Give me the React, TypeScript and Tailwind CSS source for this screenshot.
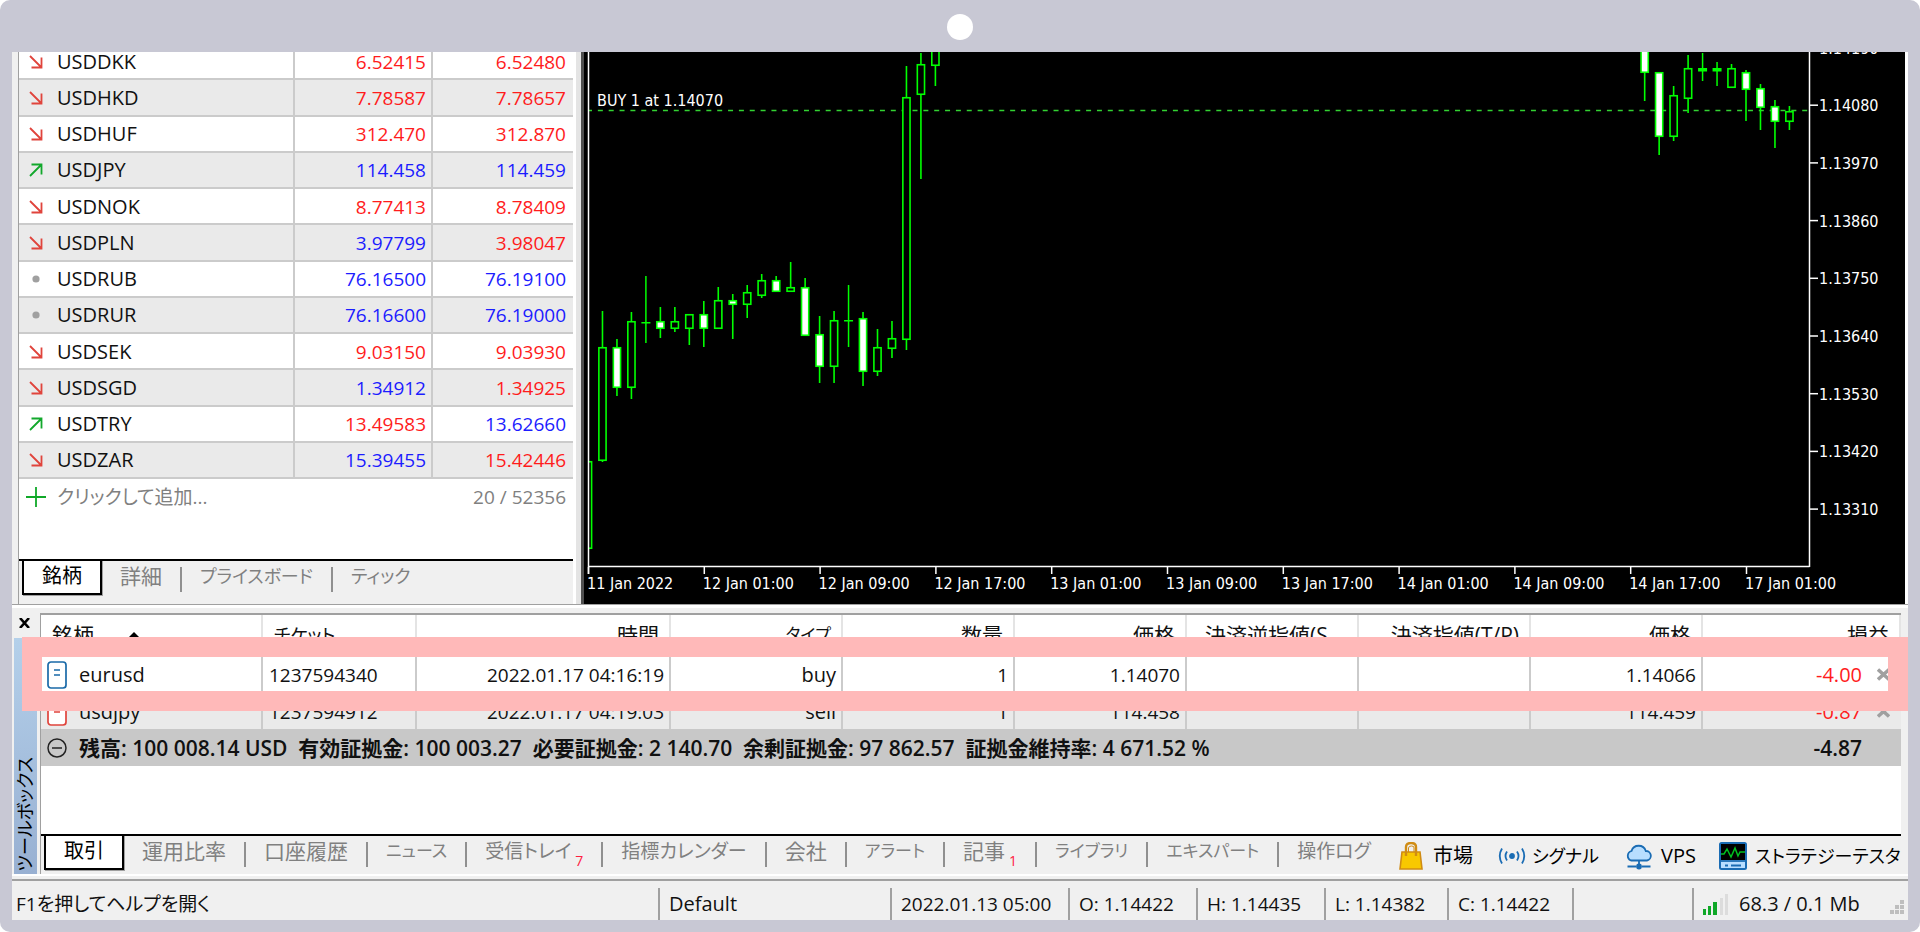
import { ReactNode } from 'react';
import clsx from 'clsx';

type Trend = 'up' | 'down' | 'flat';

interface Quote {
  symbol: string;
  trend: Trend;
  bid: string;
  ask: string;
  bidUp?: boolean;
  askUp?: boolean;
}

interface Candle {
  i: number;
  high: number;
  low: number;
  top: number;
  bottom: number;
  bear?: boolean;
}

const quotes: Quote[] = [
  { symbol: 'USDDKK', trend: 'down', bid: '6.52415', ask: '6.52480' },
  { symbol: 'USDHKD', trend: 'down', bid: '7.78587', ask: '7.78657' },
  { symbol: 'USDHUF', trend: 'down', bid: '312.470', ask: '312.870' },
  { symbol: 'USDJPY', trend: 'up', bid: '114.458', ask: '114.459', bidUp: true, askUp: true },
  { symbol: 'USDNOK', trend: 'down', bid: '8.77413', ask: '8.78409' },
  { symbol: 'USDPLN', trend: 'down', bid: '3.97799', ask: '3.98047', bidUp: true },
  { symbol: 'USDRUB', trend: 'flat', bid: '76.16500', ask: '76.19100', bidUp: true, askUp: true },
  { symbol: 'USDRUR', trend: 'flat', bid: '76.16600', ask: '76.19000', bidUp: true, askUp: true },
  { symbol: 'USDSEK', trend: 'down', bid: '9.03150', ask: '9.03930' },
  { symbol: 'USDSGD', trend: 'down', bid: '1.34912', ask: '1.34925', bidUp: true },
  { symbol: 'USDTRY', trend: 'up', bid: '13.49583', ask: '13.62660', askUp: true },
  { symbol: 'USDZAR', trend: 'down', bid: '15.39455', ask: '15.42446', bidUp: true },
];

const candles: Candle[] = [
  { i: 0, high: 461, low: 549, top: 461, bottom: 549 },
  { i: 1, high: 311, low: 462, top: 347, bottom: 461 },
  { i: 2, high: 339, low: 396, top: 347, bottom: 388, bear: true },
  { i: 3, high: 312, low: 399, top: 321, bottom: 388 },
  { i: 4, high: 276, low: 343, top: 322, bottom: 323 },
  { i: 5, high: 307, low: 338, top: 321, bottom: 329, bear: true },
  { i: 6, high: 307, low: 332, top: 321, bottom: 329 },
  { i: 7, high: 314, low: 345, top: 314, bottom: 329 },
  { i: 8, high: 301, low: 347, top: 314, bottom: 329, bear: true },
  { i: 9, high: 287, low: 329, top: 300, bottom: 329 },
  { i: 10, high: 294, low: 339, top: 300, bottom: 305, bear: true },
  { i: 11, high: 285, low: 318, top: 292, bottom: 305 },
  { i: 12, high: 274, low: 298, top: 280, bottom: 296 },
  { i: 13, high: 276, low: 292, top: 280, bottom: 292, bear: true },
  { i: 14, high: 262, low: 292, top: 287, bottom: 292 },
  { i: 15, high: 278, low: 336, top: 287, bottom: 336, bear: true },
  { i: 16, high: 316, low: 383, top: 334, bottom: 367, bear: true },
  { i: 17, high: 311, low: 383, top: 320, bottom: 367 },
  { i: 18, high: 285, low: 347, top: 320, bottom: 321 },
  { i: 19, high: 312, low: 386, top: 318, bottom: 372, bear: true },
  { i: 20, high: 329, low: 376, top: 347, bottom: 372 },
  { i: 21, high: 321, low: 358, top: 338, bottom: 349 },
  { i: 22, high: 66, low: 350, top: 97, bottom: 340 },
  { i: 23, high: 53, low: 179, top: 64, bottom: 95 },
  { i: 24, high: 40, low: 86, top: 40, bottom: 66 },
  { i: 73, high: 40, low: 101, top: 40, bottom: 73, bear: true },
  { i: 74, high: 72, low: 155, top: 72, bottom: 137, bear: true },
  { i: 75, high: 86, low: 141, top: 95, bottom: 137 },
  { i: 76, high: 55, low: 113, top: 68, bottom: 99 },
  { i: 77, high: 53, low: 81, top: 68, bottom: 71 },
  { i: 78, high: 62, low: 86, top: 68, bottom: 71 },
  { i: 79, high: 64, low: 88, top: 68, bottom: 88 },
  { i: 80, high: 70, low: 121, top: 72, bottom: 90, bear: true },
  { i: 81, high: 84, low: 130, top: 88, bottom: 108, bear: true },
  { i: 82, high: 100, low: 148, top: 106, bottom: 122, bear: true },
  { i: 83, high: 106, low: 130, top: 111, bottom: 122 },
];

const prices = ['1.14190', '1.14080', '1.13970', '1.13860', '1.13750', '1.13640', '1.13530', '1.13420', '1.13310'];

const times = [
  '11 Jan 2022',
  '12 Jan 01:00',
  '12 Jan 09:00',
  '12 Jan 17:00',
  '13 Jan 01:00',
  '13 Jan 09:00',
  '13 Jan 17:00',
  '14 Jan 01:00',
  '14 Jan 09:00',
  '14 Jan 17:00',
  '17 Jan 01:00',
];

const positions = [
  { symbol: 'eurusd', ticket: '1237594340', time: '2022.01.17 04:16:19', type: 'buy', volume: '1', open: '1.14070', price: '1.14066', profit: '-4.00' },
  { symbol: 'usdjpy', ticket: '1237594912', time: '2022.01.17 04:19:03', type: 'sell', volume: '1', open: '114.458', price: '114.459', profit: '-0.87' },
];

interface TabProps {
  label: string;
  size?: string;
  badge?: string;
  last?: boolean;
}

const toolboxTabs: TabProps[] = [
  { label: '運用比率' },
  { label: '口座履歴' },
  { label: 'ニュース', size: 'text-[17px]' },
  { label: '受信トレイ', size: 'text-[19px]', badge: '7' },
  { label: '指標カレンダー', size: 'text-[19px]' },
  { label: '会社' },
  { label: 'アラート', size: 'text-[17px]' },
  { label: '記事', badge: '1' },
  { label: 'ライブラリ', size: 'text-[17px]' },
  { label: 'エキスパート', size: 'text-[17px]' },
  { label: '操作ログ', size: 'text-[19px]', last: true },
];

function TrendIcon({ trend }: { trend: Trend }) {
  if (trend === 'flat') {
    return (
      <svg width="14" height="14" viewBox="0 0 14 14">
        <circle cx="7" cy="7" r="3.6" fill="#a0a0a0" />
      </svg>
    );
  }
  return (
    <svg width="14" height="14" viewBox="0 0 14 14" fill="none" strokeWidth="1.8" stroke={trend === 'up' ? '#12a82c' : '#e0443c'}>
      {trend === 'up' ? <path d="M1 13 12.5 1.5M2.5 1.5h10v10" /> : <path d="M1 1l11.5 11.5M2.5 12.5h10v-10" />}
    </svg>
  );
}

function OrderIcon({ sell }: { sell?: boolean }) {
  const color = sell ? '#e0443c' : '#1a6aa8';
  return (
    <svg width="20" height="28" viewBox="0 0 20 28" fill="#fff" stroke={color} strokeWidth="1.7">
      <rect x="1" y="1" width="18" height="26" rx="3" />
      <path d="M7 9h6M7 14h6" />
    </svg>
  );
}

function CloseIcon() {
  return (
    <svg width="13" height="13" viewBox="0 0 13 13" stroke="#a0a0a0" strokeWidth="3.4">
      <path d="M1 1.5 12 11.5M12 1.5 1 11.5" />
    </svg>
  );
}

function BagIcon() {
  return (
    <svg width="24" height="28" viewBox="0 0 24 28" fill="none" stroke="#d08c14" strokeWidth="1.6">
      <path d="M3 10h18l2 17H1z" fill="#f8c800" />
      <path d="M7 14V5q0-4 5-4t5 4v9" strokeWidth="2.4" />
      <path d="M9.500 10V6q0-2 3-2t2.500 2v4" strokeWidth="1" />
    </svg>
  );
}

function SignalIcon() {
  return (
    <svg width="28" height="18" viewBox="0 0 28 18" fill="none" stroke="#1a6cb4" strokeWidth="1.8">
      <circle cx="14" cy="9" r="2" fill="#1a6cb4" />
      <path d="M9 4.500q-3 4.500 0 9M19 4.500q3 4.500 0 9M4 1.500q-4.500 7.500 0 15M24 1.500q4.500 7.500 0 15" />
    </svg>
  );
}

function CloudIcon() {
  return (
    <svg width="28" height="28" viewBox="0 0 28 28" fill="none" stroke="#1a6cb4" strokeWidth="1.8">
      <path d="M6 18.500a5 5 0 0 1 .5-9.500 7.500 7.500 0 0 1 14.300 0A4.800 4.800 0 0 1 22 18.500z" fill="#b8deff" />
      <path d="M14 18.500v5M2.500 24.500H11M17 24.500h8.500" />
      <circle cx="14" cy="24.500" r="2" fill="#1a6cb4" />
    </svg>
  );
}

function TesterIcon() {
  return (
    <svg width="28" height="28" viewBox="0 0 28 28" fill="none">
      <rect x="1" y="1" width="26" height="26" rx="1.500" fill="#b8deff" stroke="#1a6cb4" strokeWidth="2" />
      <path d="M2 2h24v16H2z" fill="#000" />
      <path d="M2 12h3l3-5 4 8 4-9 3 8 2-4h5" stroke="#00c020" strokeWidth="1.5" />
      <path d="M1 19h26" stroke="#1a6cb4" strokeWidth="1.8" />
      <path d="M6 23.500h3M12 23.500h10" stroke="#1a6cb4" strokeWidth="1.8" />
    </svg>
  );
}

function TabBar({ active, children }: { active: string; children: ReactNode }) {
  return (
    <div className="flex h-[40px] items-start overflow-hidden whitespace-nowrap border-t-2 border-black bg-[#f0f0f0] pl-[3px] text-[#808080]">
      <button className="relative -mt-[2px] h-[36px] w-[80px] shrink-0 border-x-2 border-b-2 border-black bg-white text-[20px] leading-[30px] text-black shadow-[1px_1px_0_#a0a0a0]">
        {active}
      </button>
      {children}
    </div>
  );
}

function Tab({ label, size = 'text-[21px]', badge, last }: TabProps) {
  return (
    <button
      className={clsx(
        'mt-[6px] flex h-[25px] shrink-0 items-center px-[18px]',
        size,
        !last && 'border-r-2 border-[#909090]',
      )}
    >
      <span className="-mt-[8px]">{label}</span>
      {badge && <span className="mt-[12px] pl-[4px] text-[14px] text-[#ff2040]">{badge}</span>}
    </button>
  );
}

function MarketWatch() {
  const price = 'border-b-2 border-[#cbcbcb] p-0 pt-[1px] text-right leading-[20px]';
  return (
    <section className="flex w-[564px] shrink-0 bg-[#f0f0f0] pl-[6px]">
      <div className="flex min-w-0 flex-1 flex-col border-l border-r-[3px] border-l-[#a0a0a0] border-r-white bg-white">
        <table className="-mt-[8px] h-[435px] w-full table-fixed border-separate border-spacing-0">
          <colgroup>
            <col />
            <col className="w-[138px]" />
            <col className="w-[140px]" />
          </colgroup>
          <tbody>
            {quotes.map((q) => (
              <tr key={q.symbol} className="odd:bg-white even:bg-[#eaeaea]">
                <td className="border-b-2 border-r-2 border-[#cbcbcb] p-0 pt-[1px]">
                  <div className="flex items-center gap-[14px] pl-[10px] text-[20px] leading-[20px]">
                    <TrendIcon trend={q.trend} />
                    {q.symbol}
                  </div>
                </td>
                <td className={clsx(price, 'border-r-2 pr-[5px]', q.bidUp ? 'text-[#1c1cff]' : 'text-[#ff1c1c]')}>{q.bid}</td>
                <td className={clsx(price, 'pr-[7px]', q.askUp ? 'text-[#1c1cff]' : 'text-[#ff1c1c]')}>{q.ask}</td>
              </tr>
            ))}
          </tbody>
        </table>
        <div className="flex h-[36px] items-center px-[7px] text-[#808080]">
          <svg width="20" height="20" viewBox="0 0 20 20" stroke="#10a828" strokeWidth="1.8">
            <path d="M10 0v20M0 10h20" />
          </svg>
          <button className="ml-[11px]">クリックして追加...</button>
          <span className="ml-auto">20 / 52356</span>
        </div>
        <div className="mt-auto bg-[#f0f0f0] pb-[5px]">
          <TabBar active="銘柄">
            <Tab label="詳細" />
            <Tab label="プライスボード" size="text-[18px]" />
            <Tab label="ティック" size="text-[18px]" last />
          </TabBar>
        </div>
      </div>
    </section>
  );
}

function CandleShape({ c }: { c: Candle }) {
  const x = 588 + c.i * 14.475;
  if (c.bottom - c.top < 4) {
    return (
      <g stroke="#00ff00" strokeWidth="1.5">
        <path d={`M${x} ${c.high}V${c.low}`} />
        <rect x={x - 4.5} y={c.top} width="9" height={c.bottom - c.top + 0.5} fill="#00ff00" stroke="none" />
      </g>
    );
  }
  return (
    <g stroke="#00ff00" strokeWidth="1.6">
      <path d={`M${x} ${c.high}V${c.low}`} />
      <rect x={x - 3.6} y={c.top + 0.75} width="7.2" height={c.bottom - c.top - 1.5} fill={c.bear ? '#fff' : '#000'} />
    </g>
  );
}

function Chart() {
  return (
    <section className="min-w-0 flex-1 border-r-[3px] border-white bg-black">
      <svg viewBox="584 52 1321 552" preserveAspectRatio="xMinYMin slice" className="h-full w-full font-['DejaVu_Sans_Condensed','DejaVu_Sans',sans-serif] text-[16px]">
        <path d="M588 110.500H1809" stroke="#32d232" strokeWidth="1.4" strokeDasharray="5 5.850" strokeDashoffset="1" />
        <svg x="588" y="52" width="1221" height="515" viewBox="588 52 1221 515">
          {candles.map((c) => (
            <CandleShape key={c.i} c={c} />
          ))}
        </svg>
        <path d="M588.500 52V574M588 566.500H1809.500M1809.500 52V567" fill="none" stroke="#fff" strokeWidth="1.5" />
        <text x="597" y="106" fill="#fff">BUY 1 at 1.14070</text>
        {prices.map((p, i) => (
          <g key={p}>
            <path d={`M1810 ${47.5 + i * 57.7}h8`} stroke="#fff" strokeWidth="1.5" />
            <text x="1819" y={53.5 + i * 57.7} fill="#fff">{p}</text>
          </g>
        ))}
        {times.map((t, i) => (
          <g key={t}>
            <path d={`M${588.5 + i * 115.8} 567v7`} stroke="#fff" strokeWidth="1.5" />
            <text x={587 + i * 115.8} y="589" fill="#fff">{t}</text>
          </g>
        ))}
      </svg>
    </section>
  );
}

function Positions() {
  const head = 'border-r-2 border-[#e4e4e4] p-0 pr-[10px] text-right font-normal whitespace-nowrap overflow-hidden';
  const cell = 'border-r-2 border-[#cbcbcb] p-0 pt-[2px] pr-[5px] text-right whitespace-nowrap';
  return (
    <table className="w-full table-fixed border-separate border-spacing-0">
      <colgroup>
        <col className="w-[222px]" />
        <col className="w-[154px]" />
        <col className="w-[254px]" />
        <col className="w-[172px]" />
        <col className="w-[172px]" />
        <col className="w-[172px]" />
        <col className="w-[172px]" />
        <col className="w-[172px]" />
        <col className="w-[172px]" />
        <col />
      </colgroup>
      <thead>
        <tr className="h-[40px] text-[21px]">
          <th className={head}>
            <div className="flex items-center gap-[34px] pl-[11px]">
              銘柄
              <svg width="12" height="6" viewBox="0 0 12 6">
                <path d="M6 0l6 6H0z" />
              </svg>
            </div>
          </th>
          <th className={head}>
            <div className="pl-[11px] text-left text-[18px]">チケット</div>
          </th>
          <th className={head}>時間</th>
          <th className={head}>
            <div className="text-[17px]">タイプ</div>
          </th>
          <th className={head}>数量</th>
          <th className={head}>価格</th>
          <th className={head}>
            <div className="pl-[18px] text-left">決済逆指値(S</div>
          </th>
          <th className={head}>決済指値(T/P)</th>
          <th className={head}>価格</th>
          <th className={head}>損益</th>
        </tr>
      </thead>
      <tbody>
        {positions.map((p) => (
          <tr key={p.ticket} className="h-[37px] odd:bg-white even:bg-[#eaeaea]">
            <td className={cell}>
              <div className="flex items-center gap-[12px] pl-[6px] text-[20px]">
                <OrderIcon sell={p.type === 'sell'} />
                {p.symbol}
              </div>
            </td>
            <td className={cell}>
              <div className="pl-[6px] text-left">{p.ticket}</div>
            </td>
            <td className={cell}>{p.time}</td>
            <td className={clsx(cell, 'text-[20px]')}>{p.type}</td>
            <td className={cell}>{p.volume}</td>
            <td className={cell}>{p.open}</td>
            <td className={cell} />
            <td className={cell} />
            <td className={cell}>{p.price}</td>
            <td className="p-0 pt-[2px] pr-[11px]">
              <div className="flex items-center justify-end gap-[15px] text-[20px] text-[#ff1c1c]">
                {p.profit}
                <button aria-label="決済">
                  <CloseIcon />
                </button>
              </div>
            </td>
          </tr>
        ))}
      </tbody>
      <tfoot>
        <tr className="h-[37px] bg-[#c8c8c8] text-[21px] font-semibold">
          <td colSpan={9} className="p-0">
            <div className="flex items-center gap-[12px] whitespace-pre pl-[6px]">
              <svg width="20" height="20" viewBox="0 0 20 20" fill="none" stroke="#222" strokeWidth="1.5">
                <circle cx="10" cy="10" r="9" />
                <path d="M5 10h10" />
              </svg>
              残高: 100 008.14 USD  有効証拠金: 100 003.27  必要証拠金: 2 140.70  余剰証拠金: 97 862.57  証拠金維持率: 4 671.52 %
            </div>
          </td>
          <td className="p-0 pr-[39px] text-right">-4.87</td>
        </tr>
      </tfoot>
    </table>
  );
}

function Toolbox() {
  return (
    <section className="relative flex bg-[#f0f0f0] pr-[7px] pt-[5px]">
      <div className="flex w-[28px] shrink-0 flex-col pl-[2px] pr-[3px]">
        <button aria-label="閉じる" className="flex h-[25px] items-center pl-[5px] pb-[6px]">
          <svg width="11" height="10" viewBox="0 0 11 10" stroke="#000" strokeWidth="2.6">
            <path d="M1 0l9 10M10 0L1 10" />
          </svg>
        </button>
        <div className="flex flex-1 items-end justify-center bg-linear-to-b from-[#b4d0ea] to-[#98b0d2] pb-[3px]">
          <span className="rotate-180 text-[18px] leading-[23px] text-black [text-orientation:sideways] [writing-mode:vertical-rl]">ツールボックス</span>
        </div>
      </div>
      <div className="min-w-0 flex-1 border-l border-t-2 border-[#a0a0a0] bg-white">
        <Positions />
        <div className="h-[68px]" />
        <TabBar active="取引">
          {toolboxTabs.map((t) => (
            <Tab key={t.label} {...t} />
          ))}
          <div className="ml-auto flex w-[502px] shrink-0 items-center overflow-hidden pt-[6px] text-[20px] leading-[28px] text-black">
            <a href="#market" className="flex w-[99px] shrink-0 items-center gap-[10px]">
              <BagIcon />
              市場
            </a>
            <a href="#signals" className="flex w-[127px] shrink-0 items-center gap-[6px] text-[18px]">
              <SignalIcon />
              シグナル
            </a>
            <a href="#vps" className="flex w-[94px] shrink-0 items-center gap-[8px]">
              <CloudIcon />
              VPS
            </a>
            <a href="#tester" className="flex shrink-0 items-center gap-[8px] text-[18px]">
              <TesterIcon />
              ストラテジーテスター
            </a>
          </div>
        </TabBar>
      </div>
      {/* frame around the selected position */}
      <div className="pointer-events-none absolute left-[10px] right-0 top-[29px] h-[74px] border-[20px] border-[#ffb9b9]" />
    </section>
  );
}

function StatusCell({ className, children }: { className?: string; children?: ReactNode }) {
  return <div className={clsx('flex h-[32px] shrink-0 items-center border-l-2 border-[#a0a0a0] pl-[9px]', className)}>{children}</div>;
}

function StatusBar() {
  return (
    <footer className="flex items-end whitespace-nowrap border-t-2 border-[#a0a0a0] bg-[#f0f0f0] pt-[7px]">
      <div className="flex h-[32px] flex-1 items-center pl-[4px]">F1を押してヘルプを開く</div>
      <StatusCell className="w-[232px] text-[20px]">Default</StatusCell>
      <StatusCell className="w-[178px]">2022.01.13 05:00</StatusCell>
      <StatusCell className="w-[128px]">O: 1.14422</StatusCell>
      <StatusCell className="w-[128px]">H: 1.14435</StatusCell>
      <StatusCell className="w-[123px]">L: 1.14382</StatusCell>
      <StatusCell className="w-[125px]">C: 1.14422</StatusCell>
      <StatusCell className="w-[120px]" />
      <StatusCell className="w-[216px] justify-between">
        <span className="flex items-center gap-[10px] text-[20px]">
          <svg width="26" height="21" viewBox="0 0 26 21">
            <path d="M0 15h3v6H0zM5 12h3v9H5zM10 8h4v13h-4z" fill="#10a828" />
            <path d="M17 4h3v17h-3zM22 0h3v21h-3z" fill="#dcdcdc" />
          </svg>
          68.3 / 0.1 Mb
        </span>
        <svg width="18" height="28" viewBox="0 0 18 28" fill="#bebebe">
          <path d="M10 10h4v4h-4zM5 15h4v4H5zM10 15h4v4h-4zM0 20h4v4H0zM5 20h4v4H5zM10 20h4v4h-4z" />
        </svg>
      </StatusCell>
    </footer>
  );
}

export default function App() {
  return (
    <div className="min-h-screen rounded-[10px] bg-[#c8c8d4] px-[12px] pb-[12px] font-['Open_Sans','Noto_Sans_CJK_JP',sans-serif] text-[19px] leading-[26px] text-[#111] [font-feature-settings:'palt']">
      <header className="flex h-[52px] items-center justify-center pt-[2px]">
        <span className="h-[26px] w-[26px] rounded-full bg-white" />
      </header>
      <main className="flex h-[552px] overflow-hidden">
        <MarketWatch />
        <div className="w-[8px] shrink-0 border-r-[3px] border-[#505050] bg-[#e4e4e4]" />
        <Chart />
      </main>
      <div className="h-[4px] border-t border-[#a0a0a0] bg-white" />
      <Toolbox />
      <div className="h-[5px] border-t-2 border-white bg-[#f0f0f0]" />
      <StatusBar />
    </div>
  );
}
